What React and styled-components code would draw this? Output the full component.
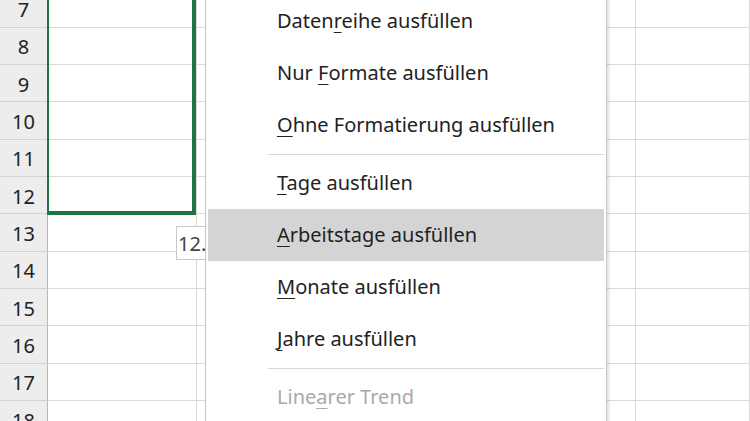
import React from "react";
import styled, { createGlobalStyle } from "styled-components";

const GlobalStyle = createGlobalStyle`
  html, body { margin: 0; padding: 0; background: #ffffff; overflow: hidden; }
  body { font-family: "Noto Sans", "Open Sans", sans-serif; }
`;

const Sheet = styled.div`
  position: relative;
  width: 750px;
  height: 421px;
  overflow: hidden;
  background: #ffffff;
`;

const Grid = styled.div`
  display: grid;
  grid-template-columns: 48px 149px 439px 1fr;
  grid-auto-rows: 37.33px;
  margin-top: -9.5px;
`;

const RowHeader = styled.div`
  box-sizing: border-box;
  background: #ededed;
  border-right: 1px solid #b9b9b9;
  border-bottom: 1px solid #d2d2d2;
  display: flex;
  align-items: center;
  justify-content: center;
  padding-top: 2px;
  font-family: "Noto Sans", sans-serif;
  font-size: 20px;
  color: #222222;
`;

const Cell = styled.div`
  box-sizing: border-box;
  border-right: 1px solid #d9d9d9;
  border-bottom: 1px solid #d9d9d9;
  background: #ffffff;
`;

const Selection = styled.div`
  position: absolute;
  box-sizing: border-box;
  left: 47px;
  top: -10px;
  width: 149px;
  height: 225px;
  border-left: 2px solid #217346;
  border-right: 4px solid #217346;
  border-bottom: 4px solid #217346;
  pointer-events: none;
`;

const FillTip = styled.div`
  position: absolute;
  left: 176px;
  top: 226px;
  width: 36px;
  height: 34px;
  box-sizing: border-box;
  background: #ffffff;
  border: 1px solid #c9c9c9;
  padding-left: 1px;
  display: flex;
  align-items: center;
  font-family: "Noto Sans", sans-serif;
  font-size: 20px;
  color: #444444;
`;

const Menu = styled.div`
  position: absolute;
  left: 205px;
  top: -6px;
  width: 402px;
  box-sizing: border-box;
  background: #ffffff;
  border: 1px solid #c6c6c6;
  padding: 0 2px;
  box-shadow: 2px 2px 3px rgba(0, 0, 0, 0.12);
  display: flex;
  flex-direction: column;
`;

const Item = styled.div`
  height: 52px;
  box-sizing: border-box;
  display: flex;
  align-items: center;
  padding-left: 69px;
  padding-bottom: 2px;
  background: ${(p) => (p.$active ? "#d4d4d4" : "transparent")};
  color: ${(p) => (p.$disabled ? "#a9a9a9" : "#222222")};
  font-family: "Noto Sans", "Open Sans", sans-serif;
  font-size: 20px;
  white-space: pre;
`;

const Label = styled.span`
  white-space: pre;

  u {
    text-decoration: underline;
    text-underline-offset: 4px;
    text-decoration-thickness: 1px;
  }
`;

const Separator = styled.div`
  height: 6px;
  display: flex;
  align-items: center;
  padding-left: 60px;

  &::after {
    content: "";
    flex: 1;
    height: 1px;
    background: #d7d7d7;
  }
`;

const rows = [7, 8, 9, 10, 11, 12, 13, 14, 15, 16, 17, 18];

const menu = [
  { pre: "Daten", key: "r", post: "eihe ausfüllen" },
  { pre: "Nur ", key: "F", post: "ormate ausfüllen" },
  { pre: "", key: "O", post: "hne Formatierung ausfüllen" },
  { sep: true },
  { pre: "", key: "T", post: "age ausfüllen" },
  { pre: "", key: "A", post: "rbeitstage ausfüllen", active: true },
  { pre: "", key: "M", post: "onate ausfüllen" },
  { pre: "", key: "J", post: "ahre ausfüllen" },
  { sep: true },
  { pre: "Line", key: "a", post: "rer Trend", disabled: true },
];

export default function App() {
  return (
    <>
      <GlobalStyle />
      <Sheet>
        <Grid>
          {rows.map((r) => (
            <React.Fragment key={r}>
              <RowHeader>{r}</RowHeader>
              <Cell />
              <Cell />
              <Cell />
            </React.Fragment>
          ))}
        </Grid>
        <Selection />
        <FillTip>12.</FillTip>
        <Menu>
          {menu.map((m, i) =>
            m.sep ? (
              <Separator key={i} />
            ) : (
              <Item key={i} $active={m.active} $disabled={m.disabled}>
                <Label>
                  {m.pre}
                  <u>{m.key}</u>
                  {m.post}
                </Label>
              </Item>
            )
          )}
        </Menu>
      </Sheet>
    </>
  );
}
